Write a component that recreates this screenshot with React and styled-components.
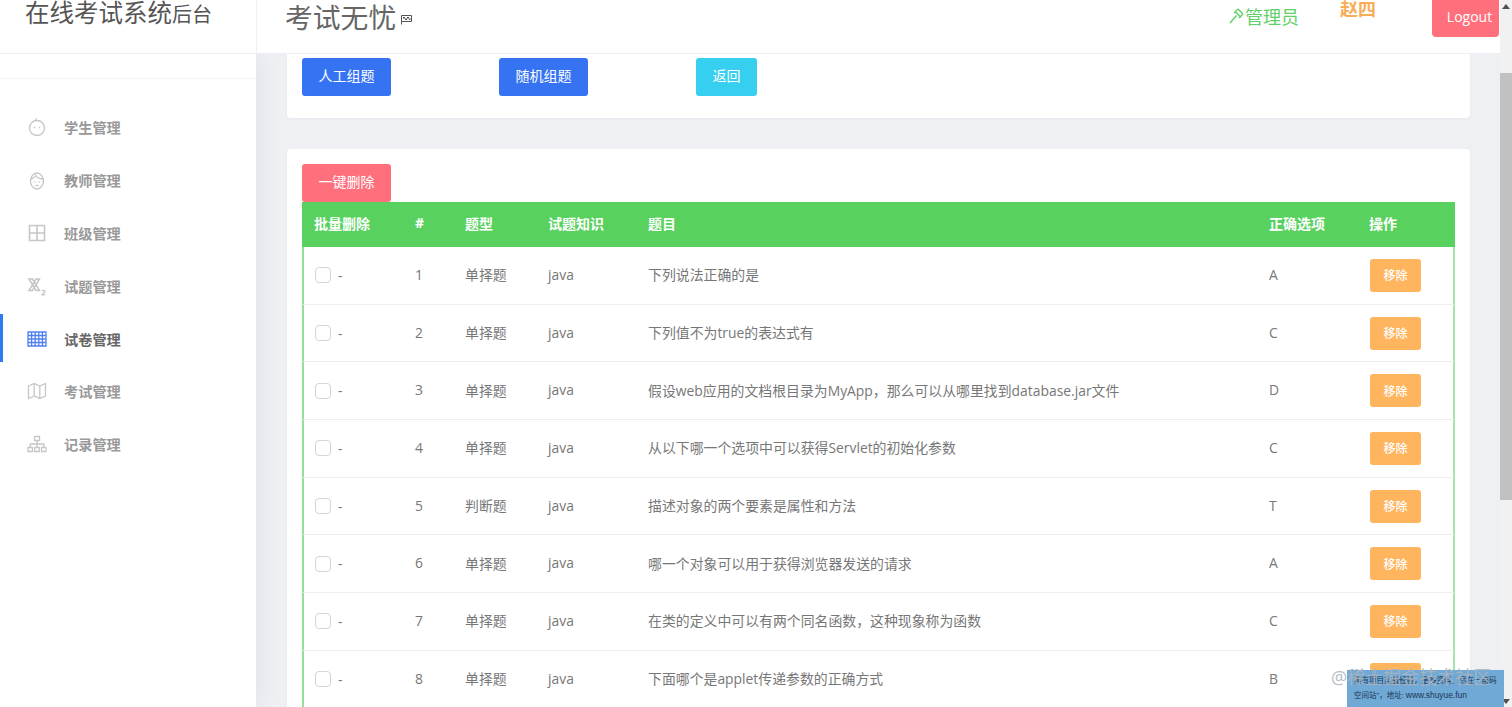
import React from 'react';
import styled, { createGlobalStyle } from 'styled-components';

const GlobalStyle = createGlobalStyle`
    html, body {
        margin: 0;
        height: 100%;
        overflow: hidden;
    }
    body {
        font-family: 'Open Sans', 'Noto Sans CJK SC', sans-serif;
        color: #666666;
        background: #eef0f4;
    }
`;

const Page = styled.div`
    position: relative;
    display: flex;
    flex-direction: column;
    width: 1512px;
    height: 707px;
    overflow: hidden;
`;

const TopBar = styled.header`
    display: flex;
    flex: none;
    height: 54px;
    background: #ffffff;
    border-bottom: 1px solid #eceef2;
    box-sizing: border-box;
    position: relative;
    z-index: 2;
`;

const Brand = styled.div`
    width: 257px;
    box-sizing: border-box;
    padding-left: 25px;
    border-right: 1px solid #eef0f3;
    font-size: 24.5px;
    line-height: 26px;
    color: #555555;
    white-space: nowrap;
`;

const BrandSub = styled.span`
    font-size: 20px;
`;

const BarTitle = styled.div`
    display: flex;
    align-items: center;
    height: 32px;
    padding-left: 28px;
    font-size: 27.8px;
    color: #666666;
`;

const BarRight = styled.div`
    display: flex;
    flex: 1;
    justify-content: flex-end;
    align-items: flex-start;
    padding-right: 13px;
`;

const Role = styled.div`
    display: flex;
    align-items: center;
    height: 32px;
    color: #5fd068;
    font-size: 18px;
    margin-right: 41px;
`;

const UserName = styled.div`
    width: 92px;
    color: #f9ad55;
    font-size: 18px;
    font-weight: 700;
    line-height: 18px;
`;

const LogoutButton = styled.button`
    width: 67px;
    height: 37px;
    padding: 0 0 4px 8px;
    border: 0;
    border-radius: 0 0 4px 4px;
    background: #ff6f7c;
    color: #ffffff;
    font: inherit;
    font-size: 14px;
`;

const Body = styled.div`
    display: flex;
    flex: 1;
    min-height: 0;
`;

const Sidebar = styled.aside`
    flex: none;
    width: 256px;
    background: #ffffff;
    box-shadow: 0 0 24px rgba(60, 70, 90, 0.1);
`;

const SideSpacer = styled.div`
    height: 24px;
    border-bottom: 1px solid #f3f4f6;
`;

const Nav = styled.nav`
    padding-top: 22px;
`;

const NavItem = styled.div`
    position: relative;
    display: flex;
    align-items: center;
    gap: 17px;
    height: 52.8px;
    padding-left: 27px;
    font-size: 14.2px;
    font-weight: 700;
    color: ${props => (props.$active ? '#666666' : '#999999')};

    &::before {
        content: '';
        display: ${props => (props.$active ? 'block' : 'none')};
        position: absolute;
        left: 0;
        top: 2px;
        width: 3px;
        height: 48px;
        background: #2f7bf0;
    }
`;

const NavIcon = styled.svg`
    flex: none;
    width: 20px;
    height: 20px;
    fill: none;
    stroke: ${props => (props.$active ? '#4f80f0' : '#c6c6c6')};
    stroke-width: 1.3;
`;

const Main = styled.main`
    flex: 1;
    min-width: 0;
    padding: 0 30px 0 31px;
    overflow: hidden;
`;

const Card = styled.section`
    background: #ffffff;
    border-radius: 0 0 4px 4px;
    box-shadow: 0 1px 3px rgba(60, 70, 90, 0.05);
`;

const ActionCard = styled(Card)`
    display: flex;
    gap: 108px;
    height: 64px;
    box-sizing: border-box;
    padding: 4px 15px 0;
    margin-bottom: 31px;
`;

const ListCard = styled(Card)`
    border-radius: 4px;
    padding: 15px 15px 0;
`;

const Button = styled.button`
    flex: none;
    height: 38px;
    width: ${props => props.$width || 89}px;
    padding: 0 0 4px;
    border: 0;
    border-radius: 3px;
    background: ${props => props.$color};
    color: #ffffff;
    font: inherit;
    font-size: 14px;
`;

const ExamTable = styled.table`
    width: 1153px;
    table-layout: fixed;
    border-collapse: separate;
    border-spacing: 0;
    font-size: 13.88px;
`;

const HeadRow = styled.tr`
    height: 45px;
    background: #59d15f;
    color: #ffffff;
`;

const HeadCell = styled.th`
    padding: 0 0 4px 12px;
    text-align: left;
    font-size: 14px;
    font-weight: 700;
    white-space: nowrap;
`;

const Row = styled.tr`
    height: 57.7px;
`;

const Cell = styled.td`
    padding: 0 0 2px 12px;
    border-bottom: 1px solid #eeeeee;
    color: #777777;
    white-space: nowrap;
`;

const SelectCell = styled(Cell)`
    padding: 0 0 0 11px;
    border-left: 2px solid #94e09a;
`;

const ActionCell = styled(Cell)`
    padding: 0 0 0 13px;
    border-right: 2px solid #a5e4aa;
`;

const CheckWrap = styled.div`
    display: flex;
    align-items: center;
    gap: 7px;
`;

const CheckBox = styled.span`
    display: block;
    width: 14px;
    height: 14px;
    border: 1px solid #d5d5d5;
    border-radius: 4px;
`;

const RemoveButton = styled.button`
    display: block;
    width: 51px;
    height: 33px;
    padding: 0;
    border: 0;
    border-radius: 3px;
    background: #ffb45e;
    color: #ffffff;
    font: inherit;
    font-size: 12px;
    font-weight: 500;
`;

const ScrollBar = styled.div`
    display: flex;
    flex-direction: column;
    flex: none;
    width: 12px;
    margin-top: -54px;
    background: #f1f1f1;
    position: relative;
    z-index: 3;
`;

const ScrollArrow = styled.div`
    flex: none;
    height: 12px;
    display: flex;
    justify-content: center;
    align-items: center;
`;

const ScrollThumb = styled.div`
    flex: none;
    height: 427px;
    margin: 61px 0 auto;
    background: #c1c1c1;
`;

const AdBox = styled.div`
    position: absolute;
    left: 1347px;
    top: 670px;
    z-index: 4;
    width: 157px;
    height: 37px;
    box-sizing: border-box;
    padding: 3px 7px;
    background: #70a9d6;
    color: #1d3550;
    font-family: 'Liberation Sans', 'Noto Sans CJK SC', sans-serif;
    font-size: 7.5px;
    line-height: 15px;
`;

const AdUrl = styled.span`
    font-size: 8.4px;
`;

const Watermark = styled.div`
    position: absolute;
    left: 1331px;
    top: 665px;
    z-index: 5;
    font-size: 18px;
    line-height: 24px;
    color: rgba(172, 180, 190, 0.9);
    white-space: nowrap;
`;

const navItems = [
    {
        label: '学生管理',
        icon: (
            <>
                <circle cx="10" cy="11" r="7.5" />
                <path d="M10 3.5C9 2.900 8.700 2 9.400 1.300" />
                <path d="M6.800 10.500h1.300M11.900 10.500h1.300" strokeWidth="1.600" />
            </>
        ),
    },
    {
        label: '教师管理',
        icon: (
            <>
                <ellipse cx="10" cy="11" rx="6.500" ry="8" />
                <path d="M3.800 9c2.500-.5 4-1.700 5-3.500 1 2 3.500 3.300 7.400 3.500" />
                <path d="M7.300 12h1.200M11.500 12h1.200M8.500 15.500h3" />
            </>
        ),
    },
    {
        label: '班级管理',
        icon: <path d="M2.500 2.500h15v15h-15zM10 2.500v15M2.500 10h15" strokeWidth="1.600" />,
    },
    {
        label: '试题管理',
        icon: (
            <>
                <path d="M2 3h3.500l7 11.500H9L2 3zM12.500 3H9l-7 11.500h3.500L12.500 3z" strokeWidth="1.500" />
                <path d="M15 15.200c.5-1.100 3-1 3 .4 0 1.200-2.300 1.700-3 3.200h3.200" />
            </>
        ),
    },
    {
        label: '试卷管理',
        active: true,
        icon: <path d="M1 3h18v14H1zM1 6.500h18M1 10h18M1 13.500h18M4.600 3v14M8.200 3v14M11.800 3v14M15.400 3v14" />,
    },
    {
        label: '考试管理',
        icon: <path d="M1.500 5l5.700-2.500 5.600 2.500 5.700-2.500v12.500l-5.700 2.500-5.600-2.500L1.500 17.500zM7.200 2.500V15M12.800 5v12.500" />,
    },
    {
        label: '记录管理',
        icon: <path d="M7.500 2.500h5v4h-5zM1 13.500h4.500v4H1zM7.750 13.500h4.500v4h-4.500zM14.500 13.500H19v4h-4.500zM10 6.500v7M3.250 13.500V10h13.500v3.500" />,
    },
];

const questions = [
    { id: 1, type: '单择题', title: '下列说法正确的是', answer: 'A' },
    { id: 2, type: '单择题', title: '下列值不为true的表达式有', answer: 'C' },
    { id: 3, type: '单择题', title: '假设web应用的文档根目录为MyApp，那么可以从哪里找到database.jar文件', answer: 'D' },
    { id: 4, type: '单择题', title: '从以下哪一个选项中可以获得Servlet的初始化参数', answer: 'C' },
    { id: 5, type: '判断题', title: '描述对象的两个要素是属性和方法', answer: 'T' },
    { id: 6, type: '单择题', title: '哪一个对象可以用于获得浏览器发送的请求', answer: 'A' },
    { id: 7, type: '单择题', title: '在类的定义中可以有两个同名函数，这种现象称为函数', answer: 'C' },
    { id: 8, type: '单择题', title: '下面哪个是applet传递参数的正确方式', answer: 'B' },
];

const FlagIcon = () => (
    <svg width="11" height="10" viewBox="0 0 11 10" style={{ marginLeft: 5, marginTop: 8 }}>
        <path d="M0.500 0.500h10v6h-10zM0.500 6.500v3" fill="#ffffff" stroke="#555555" />
        <path d="M2 2h2v1.500H2zM6 2h2v1.500H6zM4 3.500h2V5H4zM8 3.500h1.500V5H8z" fill="#555555" />
    </svg>
);

const GavelIcon = () => (
    <svg width="16" height="16" viewBox="0 0 16 16" fill="none" stroke="#5fd068" strokeWidth="1.400">
        <path d="M5 5l4-4M10 10l4-4M6 3.500l6 6M7.500 7.500L1 15" />
        <path d="M9 1l5 5" />
    </svg>
);

function App() {
    return (
        <Page>
            <GlobalStyle />
            <TopBar>
                <Brand>
                    在线考试系统<BrandSub>后台</BrandSub>
                </Brand>
                <BarTitle>
                    考试无忧
                    <FlagIcon />
                </BarTitle>
                <BarRight>
                    <Role>
                        <GavelIcon />
                        管理员
                    </Role>
                    <UserName>赵四</UserName>
                    <LogoutButton>Logout</LogoutButton>
                </BarRight>
            </TopBar>
            <Body>
                <Sidebar>
                    <SideSpacer />
                    <Nav>
                        {navItems.map(item => (
                            <NavItem key={item.label} $active={item.active}>
                                <NavIcon viewBox="0 0 20 20" $active={item.active}>
                                    {item.icon}
                                </NavIcon>
                                {item.label}
                            </NavItem>
                        ))}
                    </Nav>
                </Sidebar>
                <Main>
                    <ActionCard>
                        <Button $color="#3573f3">人工组题</Button>
                        <Button $color="#3573f3">随机组题</Button>
                        <Button $color="#37cff0" $width={61}>返回</Button>
                    </ActionCard>
                    <ListCard>
                        <Button $color="#ff6f7c">一键删除</Button>
                        <ExamTable>
                            <colgroup>
                                <col style={{ width: 101 }} />
                                <col style={{ width: 50 }} />
                                <col style={{ width: 83 }} />
                                <col style={{ width: 100 }} />
                                <col style={{ width: 621 }} />
                                <col style={{ width: 100 }} />
                                <col />
                            </colgroup>
                            <thead>
                                <HeadRow>
                                    <HeadCell>批量删除</HeadCell>
                                    <HeadCell>#</HeadCell>
                                    <HeadCell>题型</HeadCell>
                                    <HeadCell>试题知识</HeadCell>
                                    <HeadCell>题目</HeadCell>
                                    <HeadCell>正确选项</HeadCell>
                                    <HeadCell>操作</HeadCell>
                                </HeadRow>
                            </thead>
                            <tbody>
                                {questions.map(q => (
                                    <Row key={q.id}>
                                        <SelectCell>
                                            <CheckWrap>
                                                <CheckBox />-
                                            </CheckWrap>
                                        </SelectCell>
                                        <Cell>{q.id}</Cell>
                                        <Cell>{q.type}</Cell>
                                        <Cell>java</Cell>
                                        <Cell>{q.title}</Cell>
                                        <Cell>{q.answer}</Cell>
                                        <ActionCell>
                                            <RemoveButton>移除</RemoveButton>
                                        </ActionCell>
                                    </Row>
                                ))}
                            </tbody>
                        </ExamTable>
                    </ListCard>
                </Main>
                <ScrollBar>
                    <ScrollArrow>
                        <svg width="8" height="5" viewBox="0 0 8 5"><path d="M0 5L4 0l4 5z" fill="#505050" /></svg>
                    </ScrollArrow>
                    <ScrollThumb />
                    <ScrollArrow>
                        <svg width="8" height="5" viewBox="0 0 8 5"><path d="M0 0L4 5l4-5z" fill="#505050" /></svg>
                    </ScrollArrow>
                </ScrollBar>
            </Body>
            <AdBox>
                具有项目实战经验，更多资料，尽在一亩码空间站"，地址: <AdUrl>www.shuyue.fun</AdUrl>
            </AdBox>
            <Watermark>@稀土掘金技术社区</Watermark>
        </Page>
    );
}

export default App;
